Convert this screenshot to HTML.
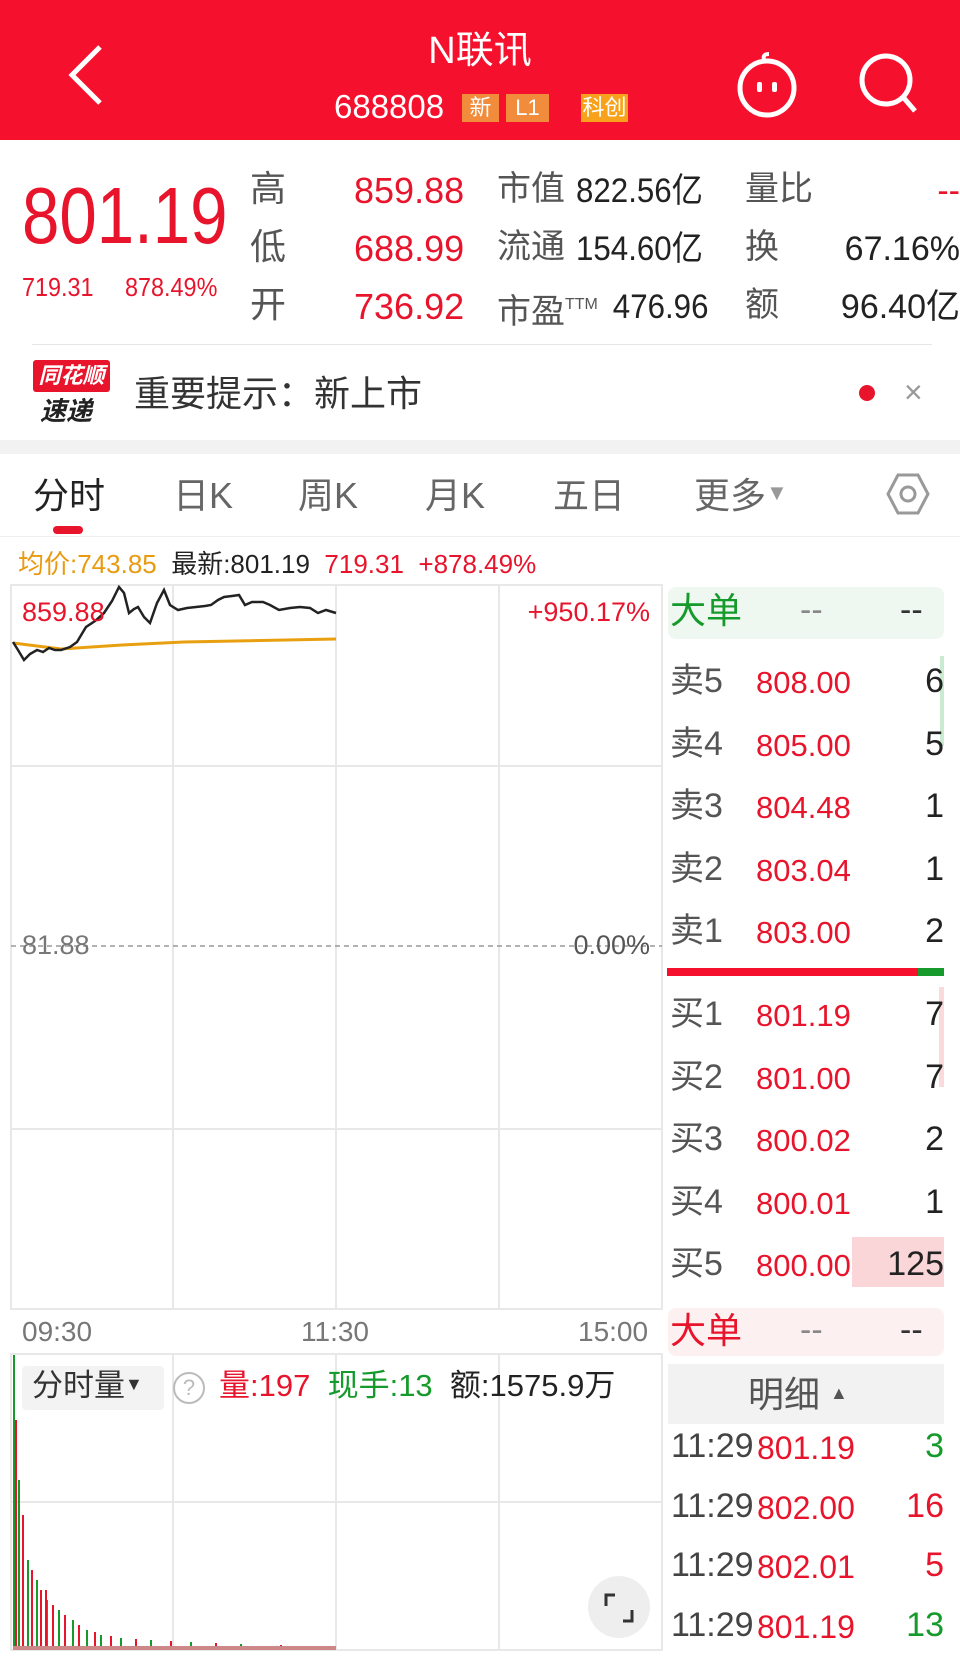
<!DOCTYPE html>
<html><head><meta charset="utf-8"><style>
*{margin:0;padding:0;box-sizing:border-box}
body{width:960px;height:1675px;background:#fff;position:relative;overflow:hidden;font-family:"Liberation Sans","Noto Sans CJK SC",sans-serif;color:#333}
.a{position:absolute;white-space:nowrap;line-height:1}
.r{color:#e8142c}.g{color:#159a2b}.k{color:#222}.gr{color:#555}
.tag{position:absolute;background:#f08c3c;color:#fff;font-size:22px;line-height:28px;text-align:center;top:94px;height:28px}
.ob{font-size:34px}
</style></head><body>
<div class="a" style="left:0;top:0;width:960px;height:140px;background:#f5112d"></div>
<svg class="a" style="left:60px;top:42px" width="50" height="66"><path d="M40 5 L12 33 L40 61" stroke="#fff" stroke-width="5" fill="none"/></svg>
<div class="a" style="left:0;width:960px;text-align:center;top:32px;color:#fff;font-size:38px">N联讯</div>
<div class="a" style="left:334px;top:90px;color:#fff;font-size:33px">688808</div>
<div class="tag" style="left:462px;width:37px">新</div>
<div class="tag" style="left:506px;width:43px">L1</div>
<div class="tag" style="left:581px;width:47px;background:#f7a21a">科创</div>
<svg class="a" style="left:732px;top:52px" width="70" height="70"><circle cx="35" cy="36" r="27" stroke="#fff" stroke-width="5" fill="none"/><path d="M33 10 q-4 -8 4 -8" stroke="#fff" stroke-width="4" fill="none"/><rect x="25" y="30" width="5" height="10" rx="2" fill="#fff"/><rect x="40" y="30" width="5" height="10" rx="2" fill="#fff"/></svg>
<svg class="a" style="left:856px;top:50px" width="70" height="70"><circle cx="30" cy="30" r="24" stroke="#fff" stroke-width="5" fill="none"/><path d="M47 47 L59 61" stroke="#fff" stroke-width="5"/></svg>

<div class="a r" style="left:22px;top:176px;font-size:80px;transform:scaleX(0.84);transform-origin:left">801.19</div>
<div class="a r" style="left:22px;top:274px;font-size:26px;transform:scaleX(0.9);transform-origin:left">719.31</div>
<div class="a r" style="left:125px;top:274px;font-size:26px;transform:scaleX(0.9);transform-origin:left">878.49%</div>
<div class="a gr" style="left:250px;top:160px;font-size:36px;line-height:58px">高<br>低<br>开</div>
<div class="a r" style="left:354px;top:162px;font-size:36px;line-height:58px">859.88<br>688.99<br>736.92</div>
<div class="a gr" style="left:497px;top:160px;font-size:34px;line-height:58px">市值<br>流通<br>市盈<sup style="font-size:16px;vertical-align:14px">TTM</sup></div>
<div class="a k" style="left:576px;top:162px;font-size:34px;line-height:58px;transform:scaleX(0.92);transform-origin:left">822.56亿<br>154.60亿<br><span style="padding-left:40px">476.96</span></div>
<div class="a gr" style="left:745px;top:160px;font-size:34px;line-height:58px">量比<br>换<br>额</div>
<div class="a k" style="right:0;top:162px;font-size:34px;line-height:58px;text-align:right"><span class="r">--</span><br>67.16%<br>96.40亿</div>
<div class="a" style="left:32px;top:344px;width:900px;height:1px;background:#e6e6e6"></div>

<div class="a" style="left:33px;top:360px;width:77px;height:32px;background:#e8142c;border-radius:3px;color:#fff;font-size:22px;font-style:italic;font-weight:bold;text-align:center;line-height:32px">同花顺</div>
<div class="a" style="left:40px;top:398px;font-size:26px;font-style:italic;font-weight:bold;color:#222">速递</div>
<div class="a" style="left:134px;top:376px;font-size:36px;color:#333">重要提示：新上市</div>
<div class="a" style="left:859px;top:385px;width:16px;height:16px;border-radius:50%;background:#e8142c"></div>
<div class="a" style="left:904px;top:376px;font-size:32px;color:#999">×</div>
<div class="a" style="left:0;top:440px;width:960px;height:14px;background:#f2f2f2"></div>

<div class="a" style="left:33px;top:478px;font-size:36px;color:#222">分时</div>
<div class="a gr" style="left:173px;top:478px;font-size:36px;color:#666">日K</div>
<div class="a" style="left:298px;top:478px;font-size:36px;color:#666">周K</div>
<div class="a" style="left:425px;top:478px;font-size:36px;color:#666">月K</div>
<div class="a" style="left:553px;top:478px;font-size:36px;color:#666">五日</div>
<div class="a" style="left:694px;top:478px;font-size:36px;color:#666">更多<span style="font-size:22px;color:#999;vertical-align:8px">▼</span></div>
<svg class="a" style="left:884px;top:470px" width="48" height="48"><path d="M14 5 H34 L44 24 L34 43 H14 L4 24 Z" stroke="#999" stroke-width="3" fill="none"/><circle cx="24" cy="24" r="7" stroke="#999" stroke-width="3" fill="none"/></svg>
<div class="a" style="left:53px;top:526px;width:30px;height:8px;border-radius:4px;background:#e8142c"></div>
<div class="a" style="left:0;top:536px;width:960px;height:1px;background:#eee"></div>

<div class="a" style="left:18px;top:550px;font-size:26px;line-height:28px"><span style="color:#e89a10">均价:743.85</span>&nbsp;&nbsp;<span class="k">最新:801.19</span>&nbsp;&nbsp;<span class="r">719.31</span>&nbsp;&nbsp;<span class="r">+878.49%</span></div>

<svg class="a" style="left:0;top:580px" width="665" height="1080">
<g stroke="#e8e8e8" stroke-width="2" fill="none">
<rect x="11" y="5" width="651" height="724"/>
<line x1="173" y1="5" x2="173" y2="729"/><line x1="336" y1="5" x2="336" y2="729"/><line x1="499" y1="5" x2="499" y2="729"/>
<line x1="11" y1="186" x2="662" y2="186"/><line x1="11" y1="549" x2="662" y2="549"/>
<rect x="11" y="774" width="651" height="296"/>
<line x1="173" y1="774" x2="173" y2="1070"/><line x1="336" y1="774" x2="336" y2="1070"/><line x1="499" y1="774" x2="499" y2="1070"/>
<line x1="11" y1="922" x2="662" y2="922"/>
</g>
<line x1="11" y1="366" x2="662" y2="366" stroke="#999" stroke-width="1.5" stroke-dasharray="5,4"/>
<path d="M13 63 L61 69 L122 65 L184 62 L336 59" stroke="#e8a010" stroke-width="3" fill="none"/>
<path d="M13 62 L18 70 L24 80 L30 74 L37 70 L43 72 L49 68 L55 70 L61 70 L70 67 L77 62 L86 47 L95 41 L104 33 L112 21 L119 7 L124 13 L129 33 L134 29 L138 27 L144 37 L150 43 L157 23 L164 10 L170 25 L178 30 L187 28 L196 27 L205 26 L211 25 L218 20 L224 17 L232 16 L239 15 L245 25 L252 22 L263 22 L270 25 L279 30 L290 28 L300 27 L310 28 L318 33 L326 30 L336 33" stroke="#222" stroke-width="2.5" fill="none"/>
<g fill="#159a2b">
<rect x="13" y="775" width="2" height="295"/><rect x="18" y="900" width="2" height="170"/><rect x="27" y="980" width="2" height="90"/><rect x="36" y="1000" width="2" height="70"/><rect x="46" y="1020" width="2" height="50"/><rect x="58" y="1030" width="2" height="40"/><rect x="72" y="1040" width="2" height="30"/><rect x="86" y="1050" width="2" height="20"/><rect x="100" y="1055" width="2" height="15"/><rect x="120" y="1058" width="2" height="12"/><rect x="150" y="1060" width="2" height="10"/><rect x="190" y="1062" width="2" height="8"/><rect x="240" y="1064" width="2" height="6"/>
</g>
<g fill="#e8142c">
<rect x="15" y="840" width="2" height="230"/><rect x="22" y="935" width="2" height="135"/><rect x="31" y="990" width="2" height="80"/><rect x="40" y="1010" width="2" height="60"/><rect x="45" y="1010" width="2" height="60"/><rect x="52" y="1025" width="2" height="45"/><rect x="64" y="1035" width="2" height="35"/><rect x="78" y="1045" width="2" height="25"/><rect x="94" y="1052" width="2" height="18"/><rect x="110" y="1056" width="2" height="14"/><rect x="135" y="1059" width="2" height="11"/><rect x="170" y="1061" width="2" height="9"/><rect x="215" y="1063" width="2" height="7"/><rect x="280" y="1065" width="2" height="5"/>
</g>
<rect x="13" y="1066" width="323" height="4" fill="#c88"/>
</svg>
<div class="a r" style="left:22px;top:599px;font-size:27px">859.88</div>
<div class="a r" style="right:310px;top:599px;font-size:27px">+950.17%</div>
<div class="a" style="left:22px;top:932px;font-size:27px;color:#777">81.88</div>
<div class="a" style="right:310px;top:932px;font-size:27px;color:#555">0.00%</div>
<div class="a" style="left:22px;top:1318px;font-size:28px;color:#777">09:30</div>
<div class="a" style="left:301px;top:1318px;font-size:28px;color:#777">11:30</div>
<div class="a" style="left:578px;top:1318px;font-size:28px;color:#777">15:00</div>
<div class="a" style="left:22px;top:1366px;width:142px;height:44px;background:#f3f3f3;border-radius:4px"></div>
<div class="a" style="left:32px;top:1370px;font-size:31px;color:#333">分时量<span style="font-size:18px;vertical-align:6px">▼</span></div>
<div class="a" style="left:173px;top:1372px;width:32px;height:32px;border:2px solid #bbb;border-radius:50%;color:#bbb;font-size:22px;text-align:center;line-height:28px">?</div>
<div class="a" style="left:219px;top:1370px;font-size:31px"><span class="r">量:197</span>&nbsp; <span class="g">现手:13</span>&nbsp; <span class="k">额:1575.9万</span></div>
<div class="a" style="left:588px;top:1576px;width:62px;height:62px;border-radius:50%;background:#eee"></div>
<svg class="a" style="left:603px;top:1592px" width="32" height="32"><path d="M3 14 V3 H12 M29 18 V29 H20" stroke="#333" stroke-width="3" fill="none"/></svg>

<div class="a" style="left:668px;top:587px;width:276px;height:52px;background:#eef8f0;border-radius:8px"></div>
<div class="a g" style="left:670px;top:593px;font-size:36px">大单</div>
<div class="a" style="left:800px;top:593px;font-size:34px;color:#888">--</div>
<div class="a" style="left:900px;top:593px;font-size:34px;color:#333">--</div>

<div class="a" style="left:940px;top:656px;width:4px;height:90px;background:#c9ecd0"></div>
<div class="a ob gr" style="left:670px;top:650px;line-height:62.5px">卖5<br>卖4<br>卖3<br>卖2<br>卖1</div>
<div class="a r" style="left:756px;top:652px;font-size:31px;line-height:62.5px">808.00<br>805.00<br>804.48<br>803.04<br>803.00</div>
<div class="a k ob" style="right:16px;top:650px;line-height:62.5px;text-align:right">6<br>5<br>1<br>1<br>2</div>
<div class="a" style="left:667px;top:968px;width:251px;height:8px;background:#f5112d"></div>
<div class="a" style="left:918px;top:968px;width:26px;height:8px;background:#159a2b"></div>
<div class="a" style="left:939px;top:987px;width:5px;height:100px;background:#fadada"></div>
<div class="a" style="left:852px;top:1237px;width:92px;height:50px;background:#fad6d8"></div>
<div class="a ob gr" style="left:670px;top:983px;line-height:62.5px">买1<br>买2<br>买3<br>买4<br>买5</div>
<div class="a r" style="left:756px;top:985px;font-size:31px;line-height:62.5px">801.19<br>801.00<br>800.02<br>800.01<br>800.00</div>
<div class="a k ob" style="right:16px;top:983px;line-height:62.5px;text-align:right">7<br>7<br>2<br>1<br>125</div>

<div class="a" style="left:668px;top:1308px;width:276px;height:48px;background:#fdf0f0;border-radius:8px"></div>
<div class="a r" style="left:670px;top:1313px;font-size:36px">大单</div>
<div class="a" style="left:800px;top:1313px;font-size:34px;color:#888">--</div>
<div class="a" style="left:900px;top:1313px;font-size:34px;color:#333">--</div>
<div class="a" style="left:668px;top:1364px;width:276px;height:60px;background:#f2f2f2"></div>
<div class="a" style="left:748px;top:1377px;font-size:36px;color:#555">明细 <span style="font-size:18px;vertical-align:8px">▲</span></div>
<div class="a" style="left:671px;top:1417px;font-size:34px;line-height:59.5px;color:#444">11:29<br>11:29<br>11:29<br>11:29</div>
<div class="a r" style="left:757px;top:1419px;font-size:32px;line-height:59.5px">801.19<br>802.00<br>802.01<br>801.19</div>
<div class="a" style="right:16px;top:1417px;font-size:34px;line-height:59.5px;text-align:right"><span class="g">3</span><br><span class="r">16</span><br><span class="r">5</span><br><span class="g">13</span></div>
</body></html>
